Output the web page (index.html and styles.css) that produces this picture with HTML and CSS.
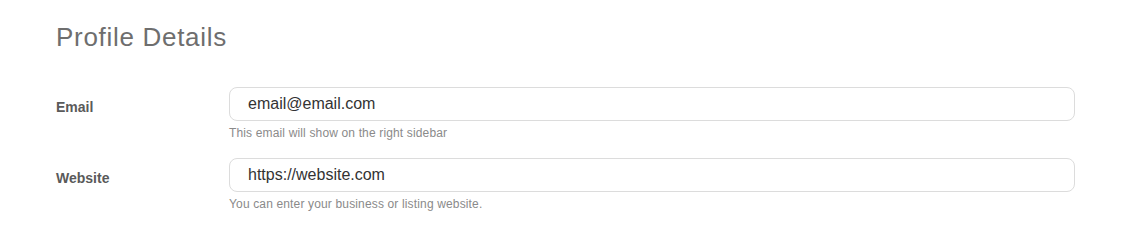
FILE: index.html
```html
<!DOCTYPE html>
<html>
<head>
<meta charset="utf-8">
<link rel="stylesheet" href="styles.css">
</head>
<body>
<div class="panel">
  <h2 class="title">Profile Details</h2>
  <div class="row">
    <label class="label">Email</label>
    <div class="field">
      <div class="input">email@email.com</div>
      <div class="help">This email will show on the right sidebar</div>
    </div>
  </div>
  <div class="row">
    <label class="label">Website</label>
    <div class="field">
      <div class="input">https://website.com</div>
      <div class="help">You can enter your business or listing website.</div>
    </div>
  </div>
</div>
</body>
</html>
```
FILE: styles.css
```css
html, body {
  margin: 0;
  padding: 0;
  background: #fff;
}
body {
  font-family: "Liberation Sans", Arial, sans-serif;
  width: 1122px;
  height: 226px;
  overflow: hidden;
}
.panel {
  padding: 21px 47px 0 56px;
}
.title {
  margin: 0;
  font-size: 26px;
  font-weight: normal;
  color: #6e6e6e;
  line-height: 32px;
  letter-spacing: 0.7px;
}
.row {
  display: flex;
  align-items: flex-start;
}
.row:first-of-type {
  margin-top: 34px;
}
.row + .row {
  margin-top: 18px;
}
.label {
  width: 173px;
  flex: none;
  font-size: 14px;
  font-weight: bold;
  color: #5a5a5a;
  padding-top: 12px;
  line-height: 16px;
}
.field {
  flex: 1;
}
.input {
  height: 32px;
  border: 1px solid #dcdcdc;
  border-radius: 8px;
  padding: 0 18px;
  font-size: 16px;
  line-height: 32px;
  color: #333;
}
.help {
  font-size: 12px;
  color: #8a8a8a;
  margin-top: 5px;
  line-height: 14px;
  letter-spacing: 0.15px;
}
```
